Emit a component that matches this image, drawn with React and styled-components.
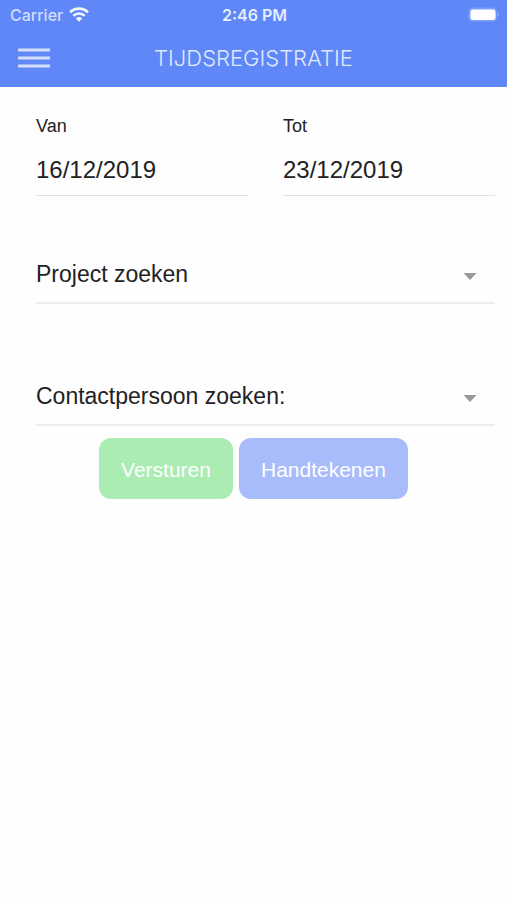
import React, { useState } from 'react'
import styled, { createGlobalStyle } from 'styled-components'

const GlobalStyle = createGlobalStyle`
    * {
        box-sizing: border-box;
    }

    body {
        margin: 0;
        background-color: #fefefe;
        color: #222;
        font-family: 'Liberation Sans', Arial, sans-serif;
    }
`

const Header = styled.header`
    background-color: #5f87f8;
    color: white;
`

const StatusBar = styled.div`
    display: grid;
    grid-template-columns: 1fr auto 1fr;
    align-items: center;
    height: 29px;
    padding: 0 8px 0 10px;

    font-family: Inter, 'Liberation Sans', sans-serif;
    font-size: 16px;
`

const Carrier = styled.div`
    display: flex;
    align-items: center;
    gap: 6px;
    color: #d3defd;
    font-weight: 500;
`

const Time = styled.time`
    color: #e6edfe;
    font-weight: 600;
`

const Battery = styled.svg`
    justify-self: end;
`

const NavBar = styled.div`
    display: grid;
    grid-template-columns: 1fr auto 1fr;
    align-items: center;
    height: 58px;
    padding: 0 18px;
`

const MenuButton = styled.button`
    display: flex;
    justify-self: start;
    padding: 0;
    border: 0;
    background: none;
    cursor: pointer;
`

const Title = styled.h1`
    margin: 0;
    color: #dfe8fe;
    font-family: Inter, 'Liberation Sans', sans-serif;
    font-size: 22px;
    font-weight: 300;
`

const Fields = styled.div`
    padding: 27px 12px 0 36px;
`

const Dates = styled.div`
    display: grid;
    grid-template-columns: 1fr 1fr;
    gap: 35px;
`

const Field = styled.div`
    display: flex;
    flex-direction: column;
    gap: 6px;
`

const Label = styled.label`
    font-size: 18px;
    line-height: 24px;
`

const DateInput = styled.input`
    width: 100%;
    height: 52px;
    padding: 0;
    border: 0;
    border-bottom: 1px solid #e2e2e2;
    border-radius: 0;
    outline: none;
    background: none;
    color: inherit;
    font-family: inherit;
    font-size: 24px;
`

const SelectField = styled.div`
    display: grid;
    align-items: center;
    margin-top: ${props => props.$gap};
    border-bottom: 2px solid #ededed;

    > * {
        grid-area: 1 / 1;
    }
`

const Select = styled.select`
    appearance: none;
    width: 100%;
    height: 56px;
    padding: 0 44px 0 0;
    border: 0;
    outline: none;
    background: none;
    color: inherit;
    font-family: inherit;
    font-size: 23px;
`

const Arrow = styled.svg`
    justify-self: end;
    margin: 4px 18px 0 0;
    pointer-events: none;
`

const Actions = styled.div`
    display: flex;
    justify-content: center;
    gap: 6px;
    padding: 12px;
`

const Button = styled.button`
    height: 61px;
    padding: 2px 22px 0;
    border: 0;
    border-radius: 12px;
    background-color: #a8bcfb;
    color: white;

    font-family: inherit;
    font-size: 21px;
    cursor: pointer;
`

const SendButton = styled(Button)`
    background-color: #abecb3;
`

const SearchSelect = ({ label, gap }) => (
    <SelectField $gap={gap}>
        <Select aria-label={label} defaultValue="">
            <option value="">{label}</option>
        </Select>
        <Arrow width="14" height="7" viewBox="0 0 14 7" aria-hidden="true">
            <path d="M0.5 0h13L7 7z" fill="#999" />
        </Arrow>
    </SelectField>
)

const App = () => {
    const [from, setFrom] = useState('16/12/2019')
    const [to, setTo] = useState('23/12/2019')

    return (
        <>
            <GlobalStyle />
            <Header>
                <StatusBar>
                    <Carrier>
                        Carrier
                        <svg width="20" height="15" viewBox="0 0 20 15" aria-hidden="true">
                            <g fill="none" stroke="#f3f6ff" strokeWidth="2.6">
                                <path d="M1 5.4C6 0.4 14 0.4 19 5.4" />
                                <path d="M4.3 8.9C7.5 5.7 12.5 5.7 15.7 8.9" />
                            </g>
                            <path d="M6.8 11.4C8.6 9.6 11.4 9.6 13.2 11.4L10 14.8z" fill="#f3f6ff" />
                        </svg>
                    </Carrier>
                    <Time>2:46 PM</Time>
                    <Battery width="31" height="16" viewBox="0 0 31 16" aria-hidden="true">
                        <rect x="0.5" y="0.5" width="28" height="14" rx="4" fill="#7f9ff9" />
                        <path d="M29.5 5.5c1.6 0.8 1.6 3.2 0 4z" fill="#a9bffb" />
                        <rect x="2.5" y="2.5" width="25" height="10.5" rx="2.5" fill="#fff" />
                    </Battery>
                </StatusBar>
                <NavBar>
                    <MenuButton type="button" aria-label="Menu">
                        <svg width="32" height="20" viewBox="0 0 32 20" aria-hidden="true">
                            <path d="M0 2h32M0 10h32M0 18h32" stroke="#d5e0fd" strokeWidth="3" />
                        </svg>
                    </MenuButton>
                    <Title>TIJDSREGISTRATIE</Title>
                </NavBar>
            </Header>
            <form onSubmit={e => e.preventDefault()}>
                <Fields>
                    <Dates>
                        <Field>
                            <Label htmlFor="van">Van</Label>
                            <DateInput id="van" value={from} onChange={e => setFrom(e.target.value)} />
                        </Field>
                        <Field>
                            <Label htmlFor="tot">Tot</Label>
                            <DateInput id="tot" value={to} onChange={e => setTo(e.target.value)} />
                        </Field>
                    </Dates>
                    <SearchSelect label="Project zoeken" gap="50px" />
                    <SearchSelect label="Contactpersoon zoeken:" gap="64px" />
                </Fields>
                <Actions>
                    <SendButton type="submit">Versturen</SendButton>
                    <Button type="button">Handtekenen</Button>
                </Actions>
            </form>
        </>
    )
}

export default App
